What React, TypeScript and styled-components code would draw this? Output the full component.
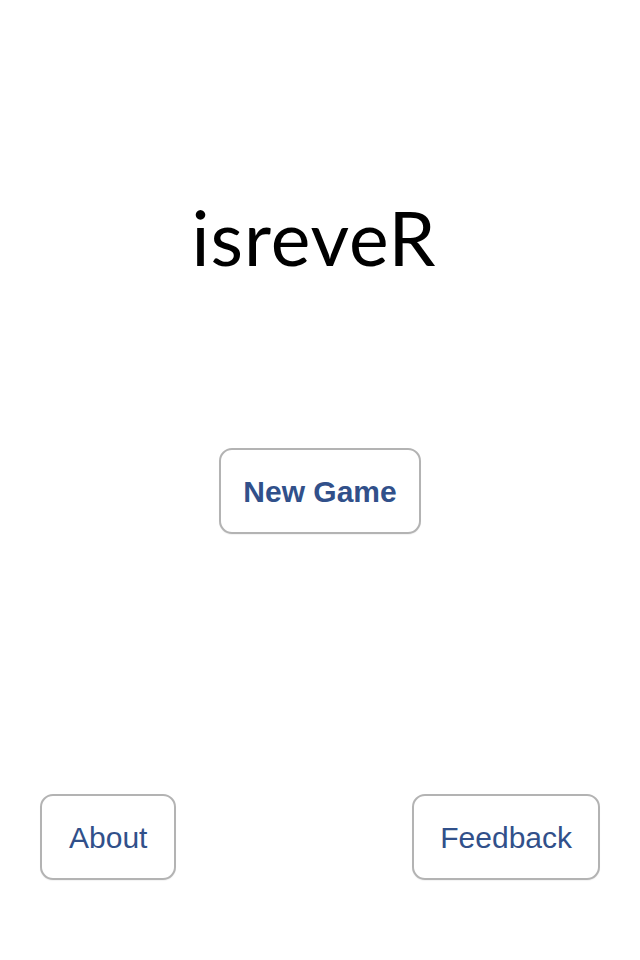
import React from 'react';
import styled, { createGlobalStyle } from 'styled-components';

const GlobalStyle = createGlobalStyle`
  html, body {
    margin: 0;
    padding: 0;
    background: #ffffff;
  }
`;

const Screen = styled.main`
  display: flex;
  flex-direction: column;
  align-items: center;
  width: 640px;
  height: 960px;
  box-sizing: border-box;
  padding: 187px 0 80px;
  font-family: 'Liberation Sans', Arial, sans-serif;
`;

const Title = styled.h1`
  margin: 0;
  font-family: Lato, 'Open Sans', sans-serif;
  font-weight: 400;
  font-size: 75px;
  line-height: 100px;
  color: #000;
  letter-spacing: 1px;
  transform: translateX(-6px);
`;

const Middle = styled.div`
  flex: 1;
  display: flex;
  justify-content: center;
  padding-top: 161px;
`;

const BottomRow = styled.div`
  display: flex;
  justify-content: space-between;
  align-self: stretch;
  padding: 0 40px;
`;

const Button = styled.button<{ $bold?: boolean; $pad: number }>`
  height: 86px;
  padding: 1px ${(p) => p.$pad}px 0;
  box-sizing: border-box;
  background: #ffffff;
  border: 2px solid #b3b3b3;
  border-radius: 13px;
  box-shadow: 0 1px 1px rgba(0, 0, 0, 0.05);
  font-family: 'Liberation Sans', Arial, sans-serif;
  font-size: 30px;
  font-weight: ${(p) => (p.$bold ? 700 : 400)};
  color: #31508a;
  cursor: pointer;
`;

const App: React.FC = () => {
  return (
    <>
      <GlobalStyle />
      <Screen>
        <Title>isreveR</Title>
        <Middle>
          <div>
            <Button $bold $pad={22}>New Game</Button>
          </div>
        </Middle>
        <BottomRow>
          <Button $pad={27}>About</Button>
          <Button $pad={26}>Feedback</Button>
        </BottomRow>
      </Screen>
    </>
  );
};

export default App;
